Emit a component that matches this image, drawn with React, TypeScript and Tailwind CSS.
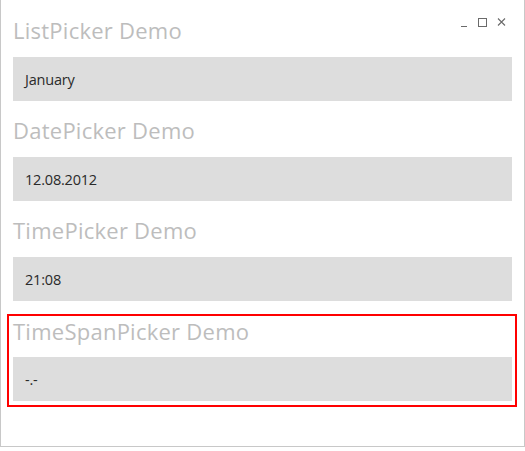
import React from "react";

const titleCls =
  "h-[30px] leading-[30px] text-[22px] text-[#bdbdbd] font-['Open_Sans','Segoe_UI',sans-serif] tracking-[0.25px] whitespace-nowrap";
const boxCls =
  "h-[44px] bg-[#dddddd] flex items-center pl-[12px] pt-[1px] text-[14.5px] text-[#2a2a2a] font-['Open_Sans','Segoe_UI',sans-serif] tracking-[-0.2px]";

function Section({ title, value }: { title: string; value: string }) {
  return (
    <div className="pt-[14px]">
      <div className={titleCls}>{title}</div>
      <div className="h-[12px]" />
      <div className={boxCls}>{value}</div>
    </div>
  );
}

export default function App() {
  return (
    <div className="w-[525px] h-[451px] bg-white">
      <div className="relative w-[525px] h-[447px] border-l border-r border-b border-[#c8c8c8] bg-white">
        <div className="absolute top-[17px] right-[18px] flex items-center gap-[10px]">
          <svg width="6" height="10" viewBox="0 0 6 10">
            <line x1="0" y1="9.5" x2="6" y2="9.5" stroke="#6a6a6a" strokeWidth="1" />
          </svg>
          <svg width="10" height="10" viewBox="0 0 10 10">
            <rect x="1.5" y="1.5" width="8" height="8" fill="none" stroke="#6a6a6a" strokeWidth="1" />
          </svg>
          <svg width="9" height="10" viewBox="0 0 9 10">
            <path d="M1 1.5 L8 8.5 M8 1.5 L1 8.5" stroke="#6a6a6a" strokeWidth="1.1" />
          </svg>
        </div>
        <div className="pt-[1px] pl-[12px] pr-[12px]">
          <Section title="ListPicker Demo" value="January" />
          <Section title="DatePicker Demo" value="12.08.2012" />
          <Section title="TimePicker Demo" value="21:08" />
          <div className="mt-[13px] ml-[-6px] mr-[-5px] border-2 border-[#ff0000] pl-[4px] pr-[3px] pb-[4px]">
            <div className={titleCls}>TimeSpanPicker Demo</div>
            <div className="h-[11px]" />
            <div className={boxCls}>-.-</div>
          </div>
        </div>
      </div>
    </div>
  );
}
